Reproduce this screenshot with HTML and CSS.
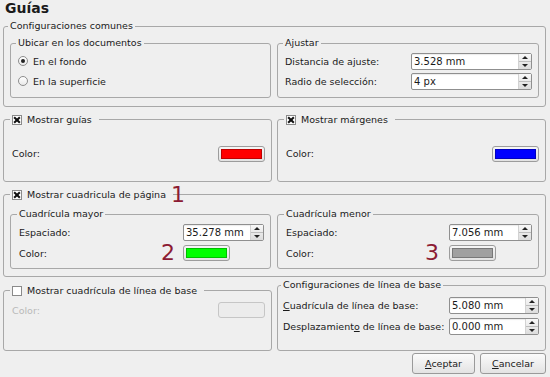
FILE: index.html
```html
<!DOCTYPE html>
<html lang="es">
<head>
    <meta charset="UTF-8">
    <title>Guías</title>
    <link rel="stylesheet" href="styles.css">
</head>
<body>
<div class="dialog">
    <h1>Guías</h1>

    <fieldset class="common">
        <legend>Configuraciones comunes</legend>
        <div class="pair">
            <fieldset class="inner">
                <legend>Ubicar en los documentos</legend>
                <label class="row opt"><span class="radio on"></span>En el fondo</label>
                <label class="row opt"><span class="radio"></span>En la superficie</label>
            </fieldset>
            <fieldset class="inner">
                <legend>Ajustar</legend>
                <div class="row">
                    <span>Distancia de ajuste:</span>
                    <span class="spin spin-121"><span class="value">3.528 mm</span><span class="arrows"><i class="up"></i><i class="down"></i></span></span>
                </div>
                <div class="row">
                    <span>Radio de selección:</span>
                    <span class="spin spin-121"><span class="value">4 px</span><span class="arrows"><i class="up"></i><i class="down"></i></span></span>
                </div>
            </fieldset>
        </div>
    </fieldset>

    <div class="cols">
        <fieldset class="show">
            <legend class="check"><span class="box on"></span>Mostrar guías</legend>
            <div class="row">
                <span>Color:</span>
                <span class="swatch"><span class="fill red"></span></span>
            </div>
        </fieldset>
        <fieldset class="show">
            <legend class="check"><span class="box on"></span>Mostrar márgenes</legend>
            <div class="row">
                <span>Color:</span>
                <span class="swatch"><span class="fill blue"></span></span>
            </div>
        </fieldset>
    </div>

    <fieldset class="page-grid">
        <legend class="check"><span class="box on"></span>Mostrar cuadricula de página</legend>
        <div class="pair">
            <fieldset class="inner sub">
                <legend>Cuadrícula mayor</legend>
                <div class="form">
                    <span>Espaciado:</span>
                    <span class="spin spin-81"><span class="value">35.278 mm</span><span class="arrows"><i class="up"></i><i class="down"></i></span></span>
                    <span>Color:</span>
                    <span class="swatch"><span class="fill green"></span></span>
                </div>
            </fieldset>
            <fieldset class="inner sub">
                <legend>Cuadrícula menor</legend>
                <div class="form">
                    <span>Espaciado:</span>
                    <span class="spin spin-83"><span class="value">7.056 mm</span><span class="arrows"><i class="up"></i><i class="down"></i></span></span>
                    <span>Color:</span>
                    <span class="swatch"><span class="fill gray"></span></span>
                </div>
            </fieldset>
        </div>
    </fieldset>

    <div class="cols last">
        <fieldset class="show baseline-off">
            <legend class="check"><span class="box"></span>Mostrar cuadrícula de línea de base</legend>
            <div class="row">
                <span class="disabled">Color:</span>
                <span class="swatch off"></span>
            </div>
        </fieldset>
        <fieldset class="baseline">
            <legend>Configuraciones de línea de base</legend>
            <div class="row">
                <span><u>C</u>uadrícula de línea de base:</span>
                <span class="spin spin-90"><span class="value">5.080 mm</span><span class="arrows"><i class="up"></i><i class="down"></i></span></span>
            </div>
            <div class="row">
                <span>Desplazamient<u>o</u> de línea de base:</span>
                <span class="spin spin-90"><span class="value">0.000 mm</span><span class="arrows"><i class="up"></i><i class="down"></i></span></span>
            </div>
        </fieldset>
    </div>

    <div class="actions">
        <button class="btn ok"><u>A</u>ceptar</button>
        <button class="btn cancel"><u>C</u>ancelar</button>
    </div>

    <span class="mark mark-1">1</span>
    <span class="mark mark-2">2</span>
    <span class="mark mark-3">3</span>
</div>
</body>
</html>
```

FILE: styles.css
```css
* {
    box-sizing: border-box;
}
body {
    margin: 0;
    background: #efefef;
    font-family: "DejaVu Sans", sans-serif;
    font-size: 9.5px;
    color: #1a1a1a;
}
.dialog {
    position: relative;
    width: 550px;
    height: 377px;
    padding: 0 4px 0 3px;
}
h1 {
    margin: 0;
    height: 20px;
    padding-left: 2px;
    font-size: 14px;
    line-height: 16px;
}

/* group boxes */
fieldset {
    margin: 0;
    min-width: 0;
    border: 1px solid #a8a8a8;
    border-radius: 3px;
}
legend {
    padding: 0 2px;
    margin-left: -2px;
    line-height: 12px;
}
legend.check {
    display: flex;
    align-items: center;
    gap: 5px;
    height: 13px;
    padding: 0 7px 0 2px;
}
.pair {
    display: grid;
    grid-template-columns: 261px 262px;
    column-gap: 6px;
}
.cols {
    display: grid;
    grid-template-columns: 269px 269px;
    column-gap: 5px;
    margin-top: 6px;
}
.row {
    display: flex;
    align-items: center;
    justify-content: space-between;
    height: 20px;
}

.common {
    padding: 5px 6px 8px 6px;
}
.inner {
    padding: 2px 6px 6px 7px;
}
.opt {
    justify-content: flex-start;
    gap: 5px;
}
.show {
    padding: 19px 6px 19px 8px;
}
.show .row {
    height: 17px;
}
.page-grid {
    margin-top: 6px;
    padding: 7px 6px 7px 6px;
}
.page-grid > legend {
    margin-left: 0;
}
.sub {
    padding: 2px 6px 5px 8px;
}
.form {
    display: grid;
    grid-template-columns: 1fr auto;
    grid-auto-rows: 20px;
    row-gap: 1px;
    align-items: center;
}
.form .swatch {
    justify-self: start;
}
.last {
    margin-top: 2px;
}
.baseline-off {
    margin-top: 5px;
    padding: 4px 6px 4px 8px;
}
.baseline-off .row {
    height: 18px;
}
.baseline {
    padding: 4px 6px 14px 5px;
}
.baseline .row + .row {
    margin-top: 1px;
}
.disabled {
    color: #b9b9b9;
}

/* controls */
.radio {
    width: 10px;
    height: 10px;
    border: 1px solid #8d8d8d;
    border-radius: 50%;
    background: linear-gradient(#ffffff, #e9e9e9);
    display: flex;
    align-items: center;
    justify-content: center;
}
.radio.on::before {
    content: "";
    width: 4px;
    height: 4px;
    border-radius: 50%;
    background: #222;
}
.box {
    position: relative;
    width: 10px;
    height: 10px;
    border: 1px solid #8a8a8a;
    background: #fff;
}
.box.on::before,
.box.on::after {
    content: "";
    position: absolute;
    left: 0;
    top: 3px;
    width: 8px;
    height: 2px;
    background: #111;
    transform: rotate(45deg);
}
.box.on::after {
    transform: rotate(-45deg);
}

.spin {
    display: flex;
    height: 17px;
    border: 1px solid #8f8f8f;
    border-radius: 2px;
    background: #fff;
    box-shadow: inset 0 1px 1px rgba(0, 0, 0, 0.08);
}
.spin-121 { width: 121px; }
.spin-81 { width: 81px; }
.spin-83 { width: 83px; }
.spin-90 { width: 90px; }
.spin .value {
    flex: 1;
    padding-left: 2px;
    line-height: 15px;
    font-size: 10px;
}
.arrows {
    width: 13px;
    display: flex;
    flex-direction: column;
    border-left: 1px solid #d2d2d2;
    background: linear-gradient(#f8f8f8, #dcdcdc);
}
.arrows i {
    flex: 1;
    display: flex;
    align-items: center;
    justify-content: center;
}
.arrows i::before {
    content: "";
    border-left: 3px solid transparent;
    border-right: 3px solid transparent;
}
.arrows .up::before {
    border-bottom: 3px solid #222;
}
.arrows .down {
    border-top: 1px solid #bdbdbd;
}
.arrows .down::before {
    border-top: 3px solid #222;
}

.swatch {
    width: 47px;
    height: 16px;
    padding: 2px;
    border: 1px solid #9c9c9c;
    border-radius: 3px;
    background: linear-gradient(#f6f6f6, #e2e2e2);
    display: flex;
}
.swatch .fill {
    flex: 1;
    border: 1px solid rgba(0, 0, 0, 0.25);
}
.swatch.off {
    border-color: #c6c6c6;
    background: #ececec;
}
.red { background: #ff0000; }
.blue { background: #0000ff; }
.green { background: #00ff00; }
.gray { background: #a0a0a0; }

.actions {
    display: flex;
    justify-content: flex-end;
    gap: 5px;
    margin-top: 2px;
}
.btn {
    height: 21px;
    padding: 0;
    border: 1px solid #9a9a9a;
    border-radius: 3px;
    background: linear-gradient(#fbfbfb, #e3e3e3);
    font: inherit;
    color: inherit;
}
.ok { width: 63px; }
.cancel { width: 66px; }

/* annotation numbers */
.mark {
    position: absolute;
    font-size: 22px;
    line-height: 22px;
    color: #8c1b33;
}
.mark-1 { left: 171px; top: 184px; }
.mark-2 { left: 161px; top: 242px; }
.mark-3 { left: 425px; top: 242px; }
```
